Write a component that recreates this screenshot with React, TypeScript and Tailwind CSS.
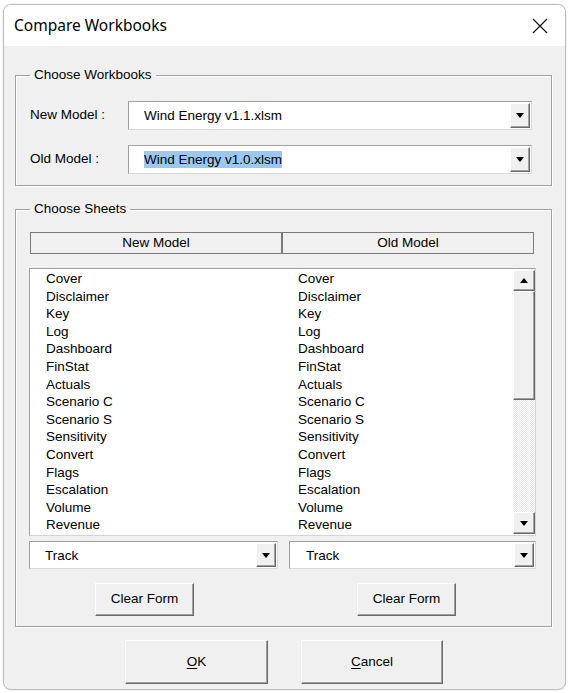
import React from 'react'

// Sheet names listed in both columns of the sheet picker
const SHEETS = [
  'Cover',
  'Disclaimer',
  'Key',
  'Log',
  'Dashboard',
  'FinStat',
  'Actuals',
  'Scenario C',
  'Scenario S',
  'Sensitivity',
  'Convert',
  'Flags',
  'Escalation',
  'Volume',
  'Revenue',
]

const raised =
  'bg-[#f0f0f0] border border-t-white border-l-white border-r-[#696969] border-b-[#696969] shadow-[inset_-1px_-1px_0_#a0a0a0]'

function Arrow({ up = false }: { up?: boolean }) {
  return (
    <svg width="8" height="5" viewBox="0 0 8 5" className="block">
      {up ? <polygon points="0,5 8,5 4,0" fill="#000" /> : <polygon points="0,0 8,0 4,5" fill="#000" />}
    </svg>
  )
}

function DropButton({ className = '' }: { className?: string }) {
  return (
    <div className={`${raised} w-[20px] flex items-center justify-center ${className}`}>
      <Arrow />
    </div>
  )
}

function Combo({
  value,
  selected = false,
  className = '',
  textIndent = 'pl-[14px]',
}: {
  value: string
  selected?: boolean
  className?: string
  textIndent?: string
}) {
  return (
    <div className={`bg-white border border-[#a0a0a0] border-b-[#d8d8d8] border-r-[#d8d8d8] flex items-stretch p-[1px] ${className}`}>
      <div className={`flex-1 flex items-center ${textIndent}`}>
        <span className={selected ? 'bg-[#99c9f0] leading-[17px]' : 'leading-[17px]'}>{value}</span>
      </div>
      <DropButton />
    </div>
  )
}

function Frame({
  title,
  children,
  className = '',
  legendClass = 'ml-0',
}: {
  title: string
  children: React.ReactNode
  className?: string
  legendClass?: string
}) {
  return (
    <fieldset className={`border border-[#a0a0a0] shadow-[inset_1px_1px_0_#fff,1px_1px_0_#fff] ${className}`}>
      <legend className={`px-[4px] leading-[16px] ${legendClass}`}>{title}</legend>
      {children}
    </fieldset>
  )
}

export default function App() {
  return (
    <div className="min-h-[693px] bg-white pt-[4px] pl-[3px] font-['Liberation_Sans',Arial,sans-serif] text-[13.5px] text-black">
      <div className="w-[563px] h-[686px] rounded-[8px] border border-[#bcbcbc] overflow-hidden bg-[#f0f0f0] shadow-[0_0_2px_rgba(0,0,0,0.15)] flex flex-col">
        {/* title bar */}
        <div className="h-[41px] bg-white flex items-center justify-between pl-[10px] pr-[17px] shrink-0">
          <span className="font-['Noto_Sans',sans-serif] text-[15.5px] leading-none">Compare Workbooks</span>
          <svg width="16" height="16" viewBox="0 0 16 16" className="mt-[1px]">
            <path d="M1 1 L15 15 M15 1 L1 15" stroke="#1a1a1a" strokeWidth="1.3" />
          </svg>
        </div>

        <div className="pl-[11px] pt-[21px]">
          <Frame title="Choose Workbooks" className="w-[537px] pl-[14px] pr-[19px] pt-[18px] pb-[11px]">
            <div className="flex items-center">
              <span className="w-[98px]">New Model :</span>
              <Combo value="Wind Energy v1.1.xlsm" className="flex-1 h-[29px]" />
            </div>
            <div className="flex items-center mt-[15px]">
              <span className="w-[98px]">Old Model :</span>
              <Combo value="Wind Energy v1.0.xlsm" selected className="flex-1 h-[29px]" />
            </div>
          </Frame>

          <Frame
            title="Choose Sheets"
            legendClass="ml-[1px]"
            className="w-[537px] mt-[15px] pl-[13px] pr-[15px] pt-[15px] pb-[10px]"
          >
            <div className="flex ml-[1px] mr-[2px] h-[22px] border border-[#7a7a7a]">
              <div className="w-[252px] flex items-center justify-center border-r-2 border-r-[#7a7a7a]">New Model</div>
              <div className="flex-1 flex items-center justify-center">Old Model</div>
            </div>

            <div className="mt-[14px] h-[268px] bg-white border border-[#a0a0a0] border-r-[#d4d4d4] border-b-[#d4d4d4] flex p-[1px] pr-0">
              <div className="flex-1 grid grid-cols-[252px_1fr] pl-[15px]">
                {SHEETS.map(s => (
                  <React.Fragment key={s}>
                    <div className="h-[17.6px] leading-[17.6px]">{s}</div>
                    <div className="h-[17.6px] leading-[17.6px]">{s}</div>
                  </React.Fragment>
                ))}
              </div>
              <div className="w-[22px] flex flex-col">
                <div className={`${raised} h-[21px] flex items-center justify-center`}>
                  <Arrow up />
                </div>
                <div className={`${raised} h-[109px]`} />
                <div className="flex-1 bg-[repeating-conic-gradient(#ffffff_0_25%,#e6e6e6_0_50%)] bg-[length:2px_2px]" />
                <div className={`${raised} h-[22px] flex items-center justify-center`}>
                  <Arrow />
                </div>
              </div>
            </div>

            <div className="flex gap-[11px] mt-[5px]">
              <Combo value="Track" className="w-[249px] h-[28px]" />
              <Combo value="Track" className="flex-1 h-[28px]" textIndent="pl-[15px]" />
            </div>

            <div className="flex mt-[14px]">
              <button className={`${raised} ml-[66px] w-[99px] h-[33px]`}>Clear Form</button>
              <button className={`${raised} ml-[163px] w-[99px] h-[33px]`}>Clear Form</button>
            </div>
          </Frame>

          <div className="flex mt-[13px] ml-[110px] gap-[33px]">
            <button className={`${raised} w-[143px] h-[44px]`}>
              <span className="underline underline-offset-2">O</span>K
            </button>
            <button className={`${raised} w-[142px] h-[44px]`}>
              <span className="underline underline-offset-2">C</span>ancel
            </button>
          </div>
        </div>
      </div>
    </div>
  )
}
